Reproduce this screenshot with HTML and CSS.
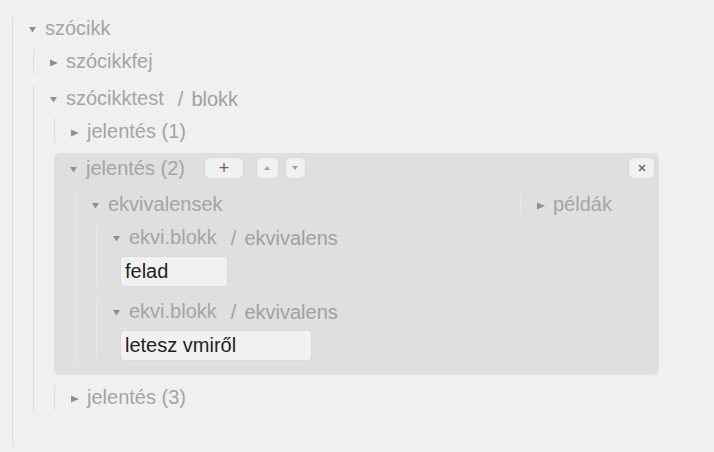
FILE: index.html
```html
<!DOCTYPE html>
<html lang="hu">
<head>
<meta charset="utf-8">
<title>szócikk</title>
<link rel="stylesheet" href="styles.css">
</head>
<body>
<div class="page">
  <div class="node root">
    <div class="head">
      <span class="tri"><svg width="8" height="6" viewBox="0 0 8 6"><path d="M0 0H7L3.5 5.5Z"/></svg></span>
      <span class="label">szócikk</span>
    </div>
    <div class="kids root-kids">
      <div class="node">
        <div class="head">
          <span class="tri"><svg width="9" height="8" viewBox="0 0 9 8"><path d="M0 0.5L8 4L0 7.5Z"/></svg></span>
          <span class="label">szócikkfej</span>
        </div>
      </div>
      <div class="node">
        <div class="head">
          <span class="tri"><svg width="8" height="6" viewBox="0 0 8 6"><path d="M0 0H7L3.5 5.5Z"/></svg></span>
          <span class="label">szócikktest</span>
          <span class="type"><span class="slash">/</span>blokk</span>
        </div>
        <div class="kids body-kids">
          <div class="node">
            <div class="head">
              <span class="tri"><svg width="9" height="8" viewBox="0 0 9 8"><path d="M0 0.5L8 4L0 7.5Z"/></svg></span>
              <span class="label">jelentés (1)</span>
            </div>
          </div>
          <div class="node active">
            <div class="head">
              <span class="tri"><svg width="8" height="6" viewBox="0 0 8 6"><path d="M0 0H7L3.5 5.5Z"/></svg></span>
              <span class="label">jelentés (2)</span>
              <button class="btn btn-add" type="button">+</button>
              <button class="btn btn-up" type="button"><svg width="6" height="4" viewBox="0 0 6 4"><path d="M0 4L3 0L6 4Z"/></svg></button>
              <button class="btn btn-down" type="button"><svg width="6" height="4" viewBox="0 0 6 4"><path d="M0 0H6L3 4Z"/></svg></button>
              <button class="btn btn-close" type="button"><svg width="8" height="8" viewBox="0 0 8 8"><path d="M1 1L7 7M7 1L1 7"/></svg></button>
            </div>
            <div class="kids row">
              <div class="node grow">
                <div class="head">
                  <span class="tri"><svg width="8" height="6" viewBox="0 0 8 6"><path d="M0 0H7L3.5 5.5Z"/></svg></span>
                  <span class="label">ekvivalensek</span>
                </div>
                <div class="kids">
                  <div class="node">
                    <div class="head">
                      <span class="tri"><svg width="8" height="6" viewBox="0 0 8 6"><path d="M0 0H7L3.5 5.5Z"/></svg></span>
                      <span class="label">ekvi.blokk</span>
                      <span class="type"><span class="slash">/</span>ekvivalens</span>
                    </div>
                    <input class="field field-short" type="text" value="felad">
                  </div>
                  <div class="node">
                    <div class="head">
                      <span class="tri"><svg width="8" height="6" viewBox="0 0 8 6"><path d="M0 0H7L3.5 5.5Z"/></svg></span>
                      <span class="label">ekvi.blokk</span>
                      <span class="type"><span class="slash">/</span>ekvivalens</span>
                    </div>
                    <input class="field field-long" type="text" value="letesz vmiről">
                  </div>
                </div>
              </div>
              <div class="node side">
                <div class="head">
                  <span class="tri"><svg width="9" height="8" viewBox="0 0 9 8"><path d="M0 0.5L8 4L0 7.5Z"/></svg></span>
                  <span class="label">példák</span>
                </div>
              </div>
            </div>
          </div>
          <div class="node">
            <div class="head">
              <span class="tri"><svg width="9" height="8" viewBox="0 0 9 8"><path d="M0 0.5L8 4L0 7.5Z"/></svg></span>
              <span class="label">jelentés (3)</span>
            </div>
          </div>
        </div>
      </div>
    </div>
  </div>
</div>
</body>
</html>
```

FILE: styles.css
```css
* {
  box-sizing: border-box;
}

html, body {
  margin: 0;
  background: #f0f0f0;
}

body {
  font-family: "Liberation Sans", Arial, sans-serif;
  font-size: 20px;
  color: #a4a4a4;
}

.page {
  padding: 13px 55px 0 12px;
}

.node {
  border-left: 1px solid #dddddd;
  border-radius: 6px;
}

.head {
  display: flex;
  align-items: center;
  height: 30px;
  padding-left: 16px;
  white-space: nowrap;
}

.tri {
  flex: none;
  width: 10px;
  margin-right: 6px;
  padding-top: 4px;
  display: flex;
  align-items: center;
}

.tri svg {
  fill: #8f8f8f;
  display: block;
}

.label {
  color: #a4a4a4;
}

.type {
  margin-left: 14px;
  color: #a0a0a0;
  position: relative;
  top: 1px;
}

.slash {
  margin-right: 8px;
}

.kids {
  display: flex;
  flex-direction: column;
  gap: 7px;
  padding: 3px 0 0 20px;
}

.root-kids {
  padding-bottom: 32px;
}

.body-kids {
  padding-bottom: 3px;
}

/* highlighted (selected) node */
.active {
  background: #dfdfdf;
  border-left-color: #dfdfdf;
  padding: 0 4px 9px 0;
}

.active > .head {
  padding-left: 15px;
}

.active .node {
  border-left-color: #e8e8e8;
}

.active > .kids {
  padding-top: 6px;
}

.row {
  flex-direction: row;
  align-items: flex-start;
  gap: 10px;
}

.grow {
  flex: 1;
  padding-bottom: 3px;
}

.side {
  flex: none;
  width: 135px;
}

/* buttons */
.btn {
  flex: none;
  height: 22px;
  padding: 0;
  border: 1px solid #d9d9d9;
  border-radius: 6px;
  background: #f1f1f1;
  display: flex;
  align-items: center;
  justify-content: center;
  font-family: "Liberation Sans", Arial, sans-serif;
  cursor: pointer;
}

.btn svg {
  display: block;
}

.btn-add {
  width: 40px;
  margin-left: 19px;
  font-size: 18px;
  font-weight: normal;
  color: #666666;
  line-height: 1;
}

.btn-up {
  width: 23px;
  margin-left: 12px;
}

.btn-down {
  width: 21px;
  margin-left: 6px;
}

.btn-up svg,
.btn-down svg {
  fill: #a0a0a0;
}

.btn-close {
  width: 27px;
  margin-left: auto;
}

.btn-close svg {
  stroke: #707070;
  stroke-width: 1.7;
  fill: none;
}

/* text fields */
.field {
  display: block;
  height: 31px;
  margin: 4px 0 2px 23px;
  padding: 0 4px;
  border: 1px solid #d9d9d9;
  border-radius: 4px;
  background: #f1f1f1;
  font-family: "Liberation Sans", Arial, sans-serif;
  font-size: 20px;
  color: #1e1e1e;
  outline: none;
}

.field-short {
  width: 108px;
}

.field-long {
  width: 192px;
}
```
